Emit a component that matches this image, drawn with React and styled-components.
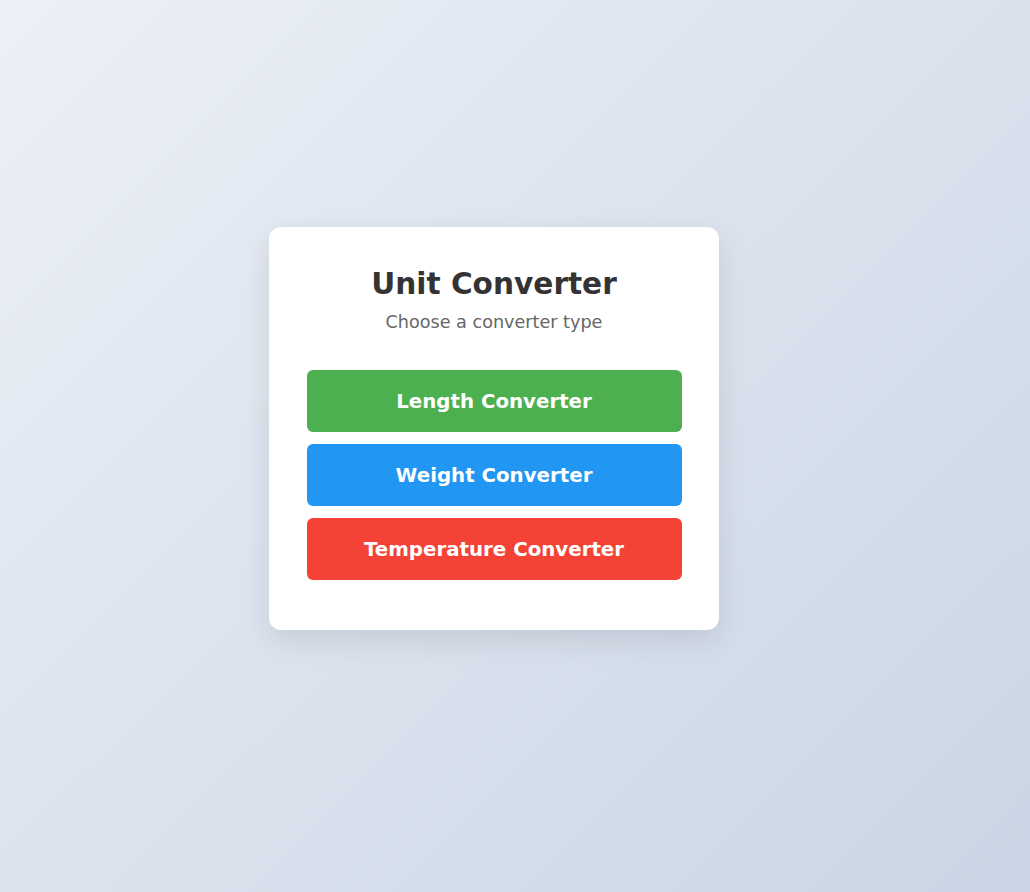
import React from "react";
import styled, { createGlobalStyle } from "styled-components";

const GlobalStyle = createGlobalStyle`
  html, body {
    margin: 0;
    padding: 0;
  }
  body {
    font-family: "DejaVu Sans", Verdana, sans-serif;
    background: linear-gradient(135deg, #ecf0f7 0%, #cad5e5 100%);
    min-height: 100vh;
  }
`;

const Page = styled.div`
  min-height: 100vh;
  box-sizing: border-box;
  padding: 0 42px 35px 0;
  display: flex;
  align-items: center;
  justify-content: center;
`;

const Card = styled.div`
  width: 450px;
  box-sizing: border-box;
  background: #fff;
  border-radius: 12px;
  padding: 40px 37.5px 50px;
  box-shadow: 0 10px 30px rgba(0, 0, 0, 0.1);
  text-align: center;
`;

const Title = styled.h1`
  margin: 0;
  font-size: 29.6px;
  font-weight: bold;
  color: #333;
`;

const Subtitle = styled.p`
  margin: 11px 0 38px;
  font-size: 17.6px;
  color: #666;
`;

const ButtonList = styled.div`
  display: flex;
  flex-direction: column;
  gap: 12px;
`;

const ConverterButton = styled.button`
  display: block;
  width: 100%;
  height: 62px;
  border: none;
  border-radius: 6px;
  background: ${p => p.color};
  color: #fff;
  font-family: inherit;
  font-size: 19.8px;
  font-weight: bold;
  cursor: pointer;
`;

const converters = [
  { name: "Length Converter", color: "#4caf50" },
  { name: "Weight Converter", color: "#2196f3" },
  { name: "Temperature Converter", color: "#f44336" },
];

export default function App() {
  return (
    <>
      <GlobalStyle />
      <Page>
        <Card>
          <Title>Unit Converter</Title>
          <Subtitle>Choose a converter type</Subtitle>
          <ButtonList>
            {converters.map(c => (
              <ConverterButton key={c.name} color={c.color}>
                {c.name}
              </ConverterButton>
            ))}
          </ButtonList>
        </Card>
      </Page>
    </>
  );
}
